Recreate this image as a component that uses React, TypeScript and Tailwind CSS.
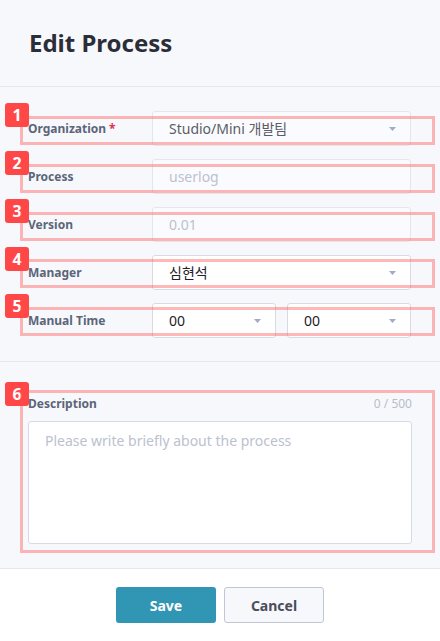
import React from 'react';

const FONT = { fontFamily: '"Noto Sans", "Noto Sans CJK KR", sans-serif' };

// ─── Annotation overlays (numbered red markers over the form) ────────────────
const MARKS = [
  { n: 1, box: 'top-[116px] h-[29px]', badge: 'top-[103px]' },
  { n: 2, box: 'top-[164px] h-[29px]', badge: 'top-[151px]' },
  { n: 3, box: 'top-[212px] h-[29px]', badge: 'top-[199px]' },
  { n: 4, box: 'top-[259px] h-[29px]', badge: 'top-[247px]' },
  { n: 5, box: 'top-[307px] h-[29px]', badge: 'top-[294px]' },
  { n: 6, box: 'top-[390px] h-[163px]', badge: 'top-[382px]' },
];

function Caret() {
  return (
    <svg width="7" height="4" viewBox="0 0 7 4" className="shrink-0">
      <path d="M0 0h7L3.5 4z" fill="#a3aac6" />
    </svg>
  );
}

function Field({
  value, placeholder, disabled, select, className = '',
}: {
  value?: string;
  placeholder?: string;
  disabled?: boolean;
  select?: boolean;
  className?: string;
}) {
  return (
    <div
      className={`h-[35px] flex items-center justify-between rounded-[3px] border pl-[16px] pr-[14px] text-[14px]
        ${disabled ? 'bg-[#fafbfe] border-[#e4e6ee]' : 'bg-white border-[#d8dbe4]'} ${className}`}
    >
      <span className={placeholder ? 'text-[#bcc1cf]' : disabled ? 'text-[#5a5d66]' : 'text-[#1f2128]'}>
        {value ?? placeholder}
      </span>
      {select && <Caret />}
    </div>
  );
}

function Row({ label, required, children }: { label: string; required?: boolean; children: React.ReactNode }) {
  return (
    <div className="flex items-center">
      <div className="w-[124px] text-[12px] font-bold text-[#5c6579]">
        {label}
        {required && <span className="text-[#e0324b] ml-[3px]">*</span>}
      </div>
      <div className="flex-1">{children}</div>
    </div>
  );
}

export default function App() {
  return (
    <div className="relative w-[440px] h-[641px] overflow-hidden bg-[#f7f8fc] flex flex-col" style={FONT}>
      {/* ── Header ── */}
      <div className="h-[87px] shrink-0 border-b border-[#e5e7ee] flex items-center px-[29px]">
        <h1 className="text-[24px] font-bold text-[#2b2e37] -mt-[1px]">Edit Process</h1>
      </div>

      {/* ── Main fields ── */}
      <div className="pl-[28px] pr-[29px] pt-[24px] pb-[23px] flex flex-col gap-[13px] border-b border-[#e5e7ee]">
        <Row label="Organization" required>
          <Field value="Studio/Mini 개발팀" disabled select />
        </Row>
        <Row label="Process">
          <Field placeholder="userlog" disabled />
        </Row>
        <Row label="Version">
          <Field placeholder="0.01" disabled />
        </Row>
        <Row label="Manager">
          <Field value="심현석" select />
        </Row>
        <Row label="Manual Time">
          <div className="flex gap-[11px]">
            <Field value="00" select className="flex-1" />
            <Field value="00" select className="flex-1" />
          </div>
        </Row>
      </div>

      {/* ── Description ── */}
      <div className="flex-1 pl-[28px] pr-[28px] pt-[33px]">
        <div className="flex items-center justify-between mb-[8px]">
          <span className="text-[12px] font-bold text-[#5c6579]">Description</span>
          <span className="text-[12px] text-[#b8bdcb]">0 / 500</span>
        </div>
        <div className="h-[123px] bg-white border border-[#d8dbe4] rounded-[3px] px-[16px] pt-[8px] text-[14px] text-[#bcc1cf]">
          Please write briefly about the process
        </div>
      </div>

      {/* ── Footer ── */}
      <div className="h-[73px] shrink-0 bg-white border-t border-[#e5e7ee] flex justify-center gap-[8px] pt-[18px]">
        <button className="w-[100px] h-[36px] rounded-[3px] bg-[#3196b3] text-white text-[14px] font-bold">Save</button>
        <button className="w-[100px] h-[36px] rounded-[3px] bg-[#f7f8fc] border border-[#c2c5d4] text-[#4a4d5a] text-[14px] font-bold">
          Cancel
        </button>
      </div>

      {/* ── Annotation markers ── */}
      {MARKS.map(m => (
        <React.Fragment key={m.n}>
          <div className={`absolute left-[5px] w-[24px] h-[24px] rounded-[3px] bg-[#ff3333]/90 flex items-center justify-center text-white text-[16px] font-bold ${m.badge}`}>
            {m.n}
          </div>
          <div className={`absolute left-[20px] w-[415px] border-[3px] border-[#ff4d4d]/40 ${m.box}`} />
        </React.Fragment>
      ))}
    </div>
  );
}
